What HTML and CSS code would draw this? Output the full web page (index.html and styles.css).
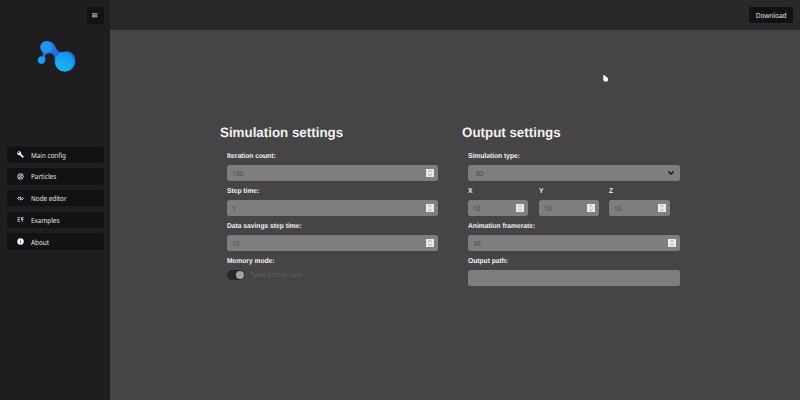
FILE: index.html
```
<!DOCTYPE html>
<html lang="en">
<head>
<meta charset="utf-8">
<title>Simulation configuration</title>
<link rel="stylesheet" href="styles.css">
</head>
<body>
<div class="app">
  <aside class="sidebar">
    <button class="menu-button" aria-label="Menu"><svg viewBox="0 0 6 5"><path d="M0 .8h6M0 2.5h6M0 4.2h6" stroke="currentColor" stroke-width="1"/></svg></button>
    <svg class="logo" viewBox="0 0 40 34">
      <defs>
        <linearGradient id="blob" x1="0" y1="0" x2="1" y2="1"><stop offset="0" stop-color="#2390ea"/><stop offset=".5" stop-color="#1e68d8"/><stop offset="1" stop-color="#126fd8"/></linearGradient>
        <linearGradient id="drop" x1=".8" y1="0" x2=".2" y2="1"><stop offset="0" stop-color="#1b8de8"/><stop offset="1" stop-color="#18b9f6"/></linearGradient>
      </defs>
      <path fill="url(#blob)" d="M10 1C15 1 17.500 4 19 8C20.500 12 23 12.500 28 11.500C34 10 38.500 15 38.500 21C38.500 27 34 31.500 28.500 31.500C22.500 31.500 18.500 27.500 18 22C17.500 17 17 14 13.500 13.300C9.500 13.500 8 14.500 8 17C9.500 20 7.500 24 4.500 24C-.5 24-.5 17 4 16.300C6.300 16 6.300 14 5.500 12C1 7.500 4 1 10 1Z"/>
      <circle cx="9.300" cy="7.300" r="5.700" fill="#2492ee"/>
      <circle cx="27.600" cy="21.800" r="9.700" fill="url(#drop)"/>
      <circle cx="4.500" cy="20" r="3.500" fill="#1c9def"/>
    </svg>
    <nav class="nav">
      <a class="nav-item"><svg viewBox="0 0 24 24"><path fill="currentColor" stroke="currentColor" d="M22.700 19l-9.100-9.100c.9-2.300.4-5-1.500-6.900-2-2-5-2.400-7.400-1.300L9 6 6 9 1.600 4.700C.4 7.100.9 10.100 2.900 12.100c1.900 1.900 4.600 2.400 6.900 1.500l9.100 9.100c.4.400 1 .4 1.400 0l2.300-2.300c.5-.4.5-1.100.1-1.400z"/></svg><span>Main config</span></a>
      <a class="nav-item"><svg viewBox="0 0 24 24"><g fill="none" stroke="currentColor" stroke-width="2.600"><circle cx="12" cy="12" r="9.500"/><path d="M3 21L21 3M7 12c0-4 3-6 7-5M17 12c0 4-3 6-7 5"/></g></svg><span>Particles</span></a>
      <a class="nav-item"><svg viewBox="0 0 24 24"><path fill="none" stroke="currentColor" stroke-width="2.600" d="M7 7l-5 5 5 5M17 7l5 5-5 5M8 12l3-6 2 12 3-6"/></svg><span>Node editor</span></a>
      <a class="nav-item"><svg viewBox="0 0 24 24"><path fill="none" stroke="currentColor" stroke-width="2.500" d="M1 6h10M1 12h8M1 18h10M23 6h-9l4 6v7M14 12h8"/></svg><span>Examples</span></a>
      <a class="nav-item"><svg viewBox="0 0 24 24"><circle cx="12" cy="12" r="11" fill="currentColor"/><path stroke="#121113" stroke-width="2.200" d="M12 10.500V18M12 6v2.500"/></svg><span>About</span></a>
    </nav>
  </aside>
  <div class="content">
    <header class="topbar"><button class="download"><span>Download</span></button></header>
    <main class="settings">
      <section class="panel">
        <h2>Simulation settings</h2>
        <div class="fields">
          <div class="field"><label>Iteration count:</label><div class="input"><span>100</span><i class="stepper"><svg viewBox="0 0 8 8"><path d="M2.200 3L4 1.300 5.800 3M2.200 5L4 6.700 5.800 5"/></svg></i></div></div>
          <div class="field"><label>Step time:</label><div class="input"><span>1</span><i class="stepper"><svg viewBox="0 0 8 8"><path d="M2.200 3L4 1.300 5.800 3M2.200 5L4 6.700 5.800 5"/></svg></i></div></div>
          <div class="field"><label>Data savings step time:</label><div class="input"><span>10</span><i class="stepper"><svg viewBox="0 0 8 8"><path d="M2.200 3L4 1.300 5.800 3M2.200 5L4 6.700 5.800 5"/></svg></i></div></div>
          <div class="field"><label>Memory mode:</label><div class="toggle-row"><span class="toggle"></span><span class="toggle-text">Tylko pamięć ram</span></div></div>
        </div>
      </section>
      <section class="panel">
        <h2>Output settings</h2>
        <div class="fields">
          <div class="field"><label>Simulation type:</label><div class="input select"><span>3D</span><svg class="chevron" viewBox="0 0 8 6"><path d="M1.500 1.500L4 4l2.500-2.500"/></svg></div></div>
          <div class="axes">
            <div class="field"><label>X</label><div class="input"><span>10</span><i class="stepper"><svg viewBox="0 0 8 8"><path d="M2.200 3L4 1.300 5.800 3M2.200 5L4 6.700 5.800 5"/></svg></i></div></div>
            <div class="field"><label>Y</label><div class="input"><span>10</span><i class="stepper"><svg viewBox="0 0 8 8"><path d="M2.200 3L4 1.300 5.800 3M2.200 5L4 6.700 5.800 5"/></svg></i></div></div>
            <div class="field"><label>Z</label><div class="input"><span>10</span><i class="stepper"><svg viewBox="0 0 8 8"><path d="M2.200 3L4 1.300 5.800 3M2.200 5L4 6.700 5.800 5"/></svg></i></div></div>
          </div>
          <div class="field"><label>Animation framerate:</label><div class="input"><span>30</span><i class="stepper"><svg viewBox="0 0 8 8"><path d="M2.200 3L4 1.300 5.800 3M2.200 5L4 6.700 5.800 5"/></svg></i></div></div>
          <div class="field"><label>Output path:</label><div class="input"></div></div>
        </div>
      </section>
    </main>
  </div>
</div>
<svg class="pointer" viewBox="0 0 5 7"><path fill="#fff" d="M.3 0L1.500.3 5 3.300 4.600 6.500H1.200L.2 4.800Z"/></svg>
</body>
</html>
```
FILE: styles.css
```
* { box-sizing: border-box; }
body { margin: 0; background: #464446; color: #f3f1f3; font-family: "Liberation Sans", Arial, sans-serif; text-rendering: geometricPrecision; }
svg { display: block; }
button { border: 0; margin: 0; padding: 0; color: #e8e6e8; background: #121113; text-rendering: inherit; }
.app { display: flex; height: 400px; overflow: hidden; }
.sidebar { width: 110px; padding: 7px 6.500px; background: #1f1d1f; display: flex; flex-direction: column; flex: none; }
.menu-button { width: 17px; height: 16.500px; border-radius: 2px; align-self: flex-end; display: grid; place-items: center; color: #c8c6c8; }
.menu-button svg { width: 5.500px; height: 4.500px; }
.logo { width: 40px; height: 34px; margin: 16px 0 0 30px; }
.nav { display: flex; flex-direction: column; gap: 5.200px; margin-top: 73px; }
.nav-item { height: 16.500px; padding-left: 10.500px; display: flex; align-items: center; gap: 6.500px; border-radius: 2px; background: #121113; color: #e6e4e6; font: 7.200px/10px "Noto Sans", sans-serif; }
.nav-item svg { width: 7px; height: 7px; color: #fff; }
.nav-item span { white-space: nowrap; transform: translateY(.7px) scaleX(.88); transform-origin: 0 50%; }
.content { flex: 1; }
.topbar { height: 30px; padding: 6.700px 7px; background: #2a282a; display: flex; justify-content: flex-end; }
.download { width: 44.500px; height: 16.500px; border-radius: 2px; font: 7.200px/10px "Noto Sans", sans-serif; }
.download span { display: inline-block; transform: translateY(.7px) scaleX(.9); }
.settings { display: flex; gap: 23.500px; padding: 94px 0 0 110px; }
.panel { width: 218px; }
h2 { margin: 0; font-size: 13.600px; line-height: 18px; font-weight: 700; white-space: nowrap; transform: translateY(.2px) scaleX(.982); transform-origin: 0 50%; }
.fields { padding: 8px 0 0 6.700px; display: flex; flex-direction: column; }
.field { height: 35px; }
label { display: block; height: 11px; margin-bottom: 4px; line-height: 11px; font-size: 7.100px; font-weight: 700; white-space: nowrap; transform: translateY(1px) scaleX(.942); transform-origin: 0 50%; }
.input { height: 16px; padding: 0 4px 0 5px; border-radius: 2.500px; background: #7f7d7f; display: flex; align-items: center; justify-content: space-between; color: #4a484a; font: 7.200px/10px "Noto Sans", sans-serif; }
.input span { transform: translateY(.6px) scaleX(.92); transform-origin: 0 50%; }
.select { padding-left: 6.500px; padding-right: 5px; }
.stepper { width: 8px; height: 8px; background: #eceaec; }
.stepper path { fill: none; stroke: #888; stroke-width: .7; }
.chevron { width: 8px; height: 6px; }
.chevron path { fill: none; stroke: #111; stroke-width: 1.400; }
.axes { display: flex; gap: 10.300px; }
.axes .field { width: 60.300px; }
.toggle-row { display: flex; align-items: center; gap: 5.500px; height: 10px; }
.toggle { width: 18px; height: 10px; border-radius: 5px; background: #2a282a; display: flex; justify-content: flex-end; align-items: center; padding-right: .5px; }
.toggle::after { content: ""; width: 8.500px; height: 8.500px; border-radius: 50%; background: #a3a1a3; }
.toggle-text { font: 7.200px/10px "Noto Sans", sans-serif; color: #656365; transform: scaleX(.88); transform-origin: 0 50%; white-space: nowrap; }
.pointer { position: absolute; left: 603px; top: 75px; width: 5px; height: 7px; }
```
